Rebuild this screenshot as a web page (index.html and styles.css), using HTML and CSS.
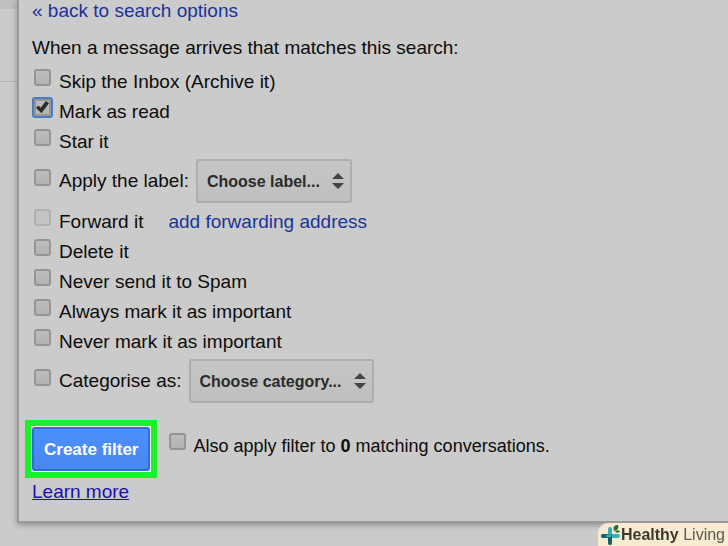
FILE: index.html
```html
<!DOCTYPE html>
<html lang="en-GB">

<head>
  <meta charset="UTF-8">
  <meta name="viewport" content="width=device-width, initial-scale=1.0">
  <title>Create filter</title>

  <link rel="stylesheet" href="styles.css">
</head>

<body>
  <div class="page">
    <div class="mail-list">
      <div class="mail-toolbar"></div>
      <div class="mail-row"></div>
    </div>

    <form class="filter-panel">
      <a class="link back-link" href="#">« back to search options</a>
      <p class="title">When a message arrives that matches this search:</p>

      <div class="row">
        <input type="checkbox" id="archive">
        <label for="archive">Skip the Inbox (Archive it)</label>
      </div>
      <div class="row">
        <input type="checkbox" id="read" class="focused" checked>
        <label for="read">Mark as read</label>
      </div>
      <div class="row">
        <input type="checkbox" id="star">
        <label for="star">Star it</label>
      </div>
      <div class="row row-select">
        <input type="checkbox" id="label">
        <label for="label">Apply the label:</label>
        <span class="select">
          <select aria-label="Choose label">
            <option>Choose label...</option>
          </select>
          <svg class="arrows" viewBox="0 0 12 18" aria-hidden="true">
            <path d="M6 1l6 6H0zM6 17l6-6H0z" />
          </svg>
        </span>
      </div>
      <div class="row">
        <input type="checkbox" id="forward" disabled>
        <label for="forward">Forward it</label>
        <a class="link forward-link" href="#">add forwarding address</a>
      </div>
      <div class="row">
        <input type="checkbox" id="delete">
        <label for="delete">Delete it</label>
      </div>
      <div class="row">
        <input type="checkbox" id="spam">
        <label for="spam">Never send it to Spam</label>
      </div>
      <div class="row">
        <input type="checkbox" id="important">
        <label for="important">Always mark it as important</label>
      </div>
      <div class="row">
        <input type="checkbox" id="not-important">
        <label for="not-important">Never mark it as important</label>
      </div>
      <div class="row row-select">
        <input type="checkbox" id="category">
        <label for="category">Categorise as:</label>
        <span class="select">
          <select aria-label="Choose category">
            <option>Choose category...</option>
          </select>
          <svg class="arrows" viewBox="0 0 12 18" aria-hidden="true">
            <path d="M6 1l6 6H0zM6 17l6-6H0z" />
          </svg>
        </span>
      </div>

      <div class="actions">
        <div class="highlight">
          <button type="button" class="create-btn">Create filter</button>
        </div>
        <div class="row">
          <input type="checkbox" id="also">
          <label for="also">Also apply filter to <b>0</b> matching conversations.</label>
        </div>
      </div>
      <a class="learn-more" href="#">Learn more</a>
    </form>
  </div>

  <div class="brand">
    <svg class="brand-icon" viewBox="0 0 20 22" aria-hidden="true">
      <path d="M9 5v14M2 12h15" stroke="#35b3b5" stroke-width="4" stroke-linecap="round" />
      <path d="M9 12v7M2 12h7" stroke="#175f6b" stroke-width="4" stroke-linecap="round" />
      <path d="M5 12h4V8" stroke="#35b3b5" stroke-width="2" />
      <path d="M13 7c-1-4 0-6 4-6 1 3 0 5-4 6zM14 8c1-2 3-2 5-1-1 2-3 2-5 1z" fill="#2c6b2b" />
    </svg>
    <span><b>Healthy</b> <span class="brand-light">Living</span></span>
  </div>
</body>

</html>
```

FILE: styles.css
```css
* {
  box-sizing: border-box;
}

body {
  margin: 0;
  min-height: 100vh;
  background: #cbcbcb;
  color: #0c0c0c;
  font-family: "Liberation Sans", Arial, sans-serif;
  font-size: 19px;
  line-height: 22px;
  overflow: hidden;
}

.page {
  display: flex;
  align-items: flex-start;
}

/* strip of the mail list behind the panel */
.mail-list {
  width: 17px;
  flex-shrink: 0;
}

.mail-toolbar {
  height: 9px;
  background: #bfbfbf;
}

.mail-row {
  height: 73px;
  border-bottom: 1px solid #b4b4b4;
}

.filter-panel {
  flex: 1;
  padding: 0 13px 18px;
  background: #cbcbcb;
  border: 2px solid #999;
  border-top: 0;
  border-right: 0;
  box-shadow: 0 2px 6px rgba(0, 0, 0, 0.3);
}

.link {
  color: #1a3399;
  text-decoration: none;
}

.back-link {
  display: block;
}

.title {
  margin: 15px 0 7px;
}

.row {
  display: flex;
  align-items: center;
  height: 30px;
}

.row label,
.row .link {
  padding-top: 2px;
}

.row-select {
  height: 50px;
}

.row-select label {
  padding-top: 0;
}

input[type="checkbox"] {
  appearance: none;
  display: grid;
  place-items: center;
  width: 17px;
  height: 17px;
  margin: 0 8px 8px 2px;
  border: 2px solid #959595;
  border-radius: 3px;
  background: linear-gradient(#bdbdbd, #b3b3b3);
  flex-shrink: 0;
}

input[type="checkbox"]:disabled {
  border-color: #b0b0b0;
  background: #c4c4c4;
}

input[type="checkbox"].focused {
  border-radius: 1px;
  outline: 2px solid #4a7cc4;
}

input[type="checkbox"]:checked::before {
  content: "";
  width: 13px;
  height: 13px;
  background: #2b2b2b;
  clip-path: polygon(0 56%, 18% 38%, 36% 56%, 76% 4%, 100% 22%, 42% 98%);
}

.forward-link {
  margin-left: 25px;
}

.select {
  display: grid;
  align-items: center;
  margin-left: 7px;
}

.select select,
.arrows {
  grid-area: 1 / 1;
}

select {
  appearance: none;
  height: 44px;
  padding: 0 30px 0 9px;
  border: 2px solid #adadad;
  border-radius: 3px;
  background: linear-gradient(#c6c6c6, #bfbfbf);
  color: #2b2b2b;
  font: bold 16px "Liberation Sans", Arial, sans-serif;
}

.arrows {
  justify-self: end;
  width: 12px;
  height: 18px;
  margin-right: 8px;
  fill: #444;
  pointer-events: none;
}

.actions {
  display: flex;
  align-items: center;
  gap: 10px;
  margin: 14px 0 3px -7px;
}

.actions .row {
  margin-bottom: 8px;
  font-size: 18px;
}

.actions input[type="checkbox"] {
  margin-right: 7px;
}

/* green frame around the button */
.highlight {
  padding: 1px;
  border: 6px solid #1bf02b;
  background: #e8f5e8;
}

.create-btn {
  display: block;
  height: 44px;
  padding: 2px 10px 0;
  border: 2px solid #2f6bdc;
  border-radius: 3px;
  background: linear-gradient(#4d90fe, #4787ed);
  color: #fff;
  font: bold 17px "Liberation Sans", Arial, sans-serif;
}

.learn-more {
  display: inline-block;
  color: #1a0fb0;
}

.brand {
  position: fixed;
  right: 0;
  bottom: 0;
  display: flex;
  align-items: center;
  height: 23px;
  padding: 0 3px;
  border-top-left-radius: 10px;
  background: #f8ebd2;
  color: #3a3a30;
  font-size: 16px;
}

.brand-icon {
  width: 20px;
  height: 22px;
  fill: none;
}

.brand-light {
  color: #5a5a50;
}
```
